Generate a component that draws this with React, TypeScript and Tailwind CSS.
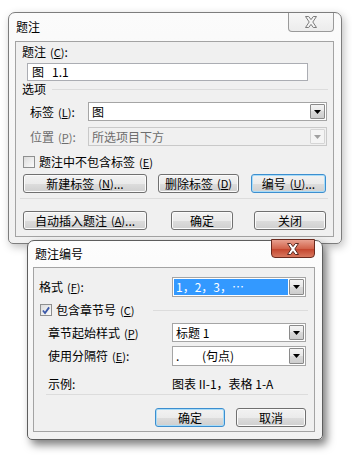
import * as React from "react";

const btnBase =
    "flex items-center justify-center h-[19px] rounded-[3px] border text-[12px] leading-none bg-[linear-gradient(#f2f2f2,#ebebeb_50%,#dddddd_50%,#cfcfcf)]";

function Btn({ children, className, focus }: { children: React.ReactNode; className: string; focus?: boolean }) {
    return (
        <div
            className={
                btnBase +
                " " +
                (focus
                    ? "border-[#3c8ecf] shadow-[inset_0_0_0_1px_#a8dcf8]"
                    : "border-[#707070] shadow-[inset_0_0_0_1px_#fbfbfb]") +
                " " +
                className
            }
        >
            {children}
        </div>
    );
}

/** mnemonic key shown like (C) with underlined letter */
function K({ k }: { k: string }) {
    return (
        <span className="text-[11px] ml-[4px]">
            (<span className="underline underline-offset-[1px]">{k}</span>)
        </span>
    );
}

function Arrow({ disabled }: { disabled?: boolean }) {
    return (
        <svg width="7" height="4" viewBox="0 0 7 4">
            <path d="M0 0h7L3.5 4z" fill={disabled ? "#a0a0a0" : "#000"} />
        </svg>
    );
}

function Combo({
    children,
    className,
    disabled,
    selected,
}: {
    children: React.ReactNode;
    className: string;
    disabled?: boolean;
    selected?: boolean;
}) {
    return (
        <div
            className={
                "flex items-stretch border p-[1px] " +
                (disabled ? "border-[#c9c9c9] bg-[#f0f0f0] text-[#6d6d6d]" : "border-[#a5a5a5] bg-white text-black") +
                " " +
                className
            }
        >
            <div
                className={
                    "flex-1 flex items-center pl-[2px] mr-[1px] text-[12px] " +
                    (selected ? "bg-[#3399ff] text-white" : "")
                }
            >
                {children}
            </div>
            <div
                className={
                    "w-[15px] flex items-center justify-center border rounded-[1px] " +
                    (disabled
                        ? "border-[#d5d5d5] bg-[#f4f4f4]"
                        : "border-[#8a8a8a] bg-[linear-gradient(#f4f4f4,#e8e8e8_50%,#dadada_50%,#cdcdcd)]")
                }
            >
                <Arrow disabled={disabled} />
            </div>
        </div>
    );
}

function CloseX({ red }: { red?: boolean }) {
    return (
        <svg width="14" height="12" viewBox="0 0 14 12">
            <path
                d="M1.5 0.5h3.2L7 3.6 9.3 0.5h3.2L8.8 6l3.7 5.5H9.3L7 8.4 4.7 11.5H1.5L5.2 6z"
                fill={red ? "#ffffff" : "#f4f4f4"}
                stroke={red ? "#5a2a22" : "#7c7c7c"}
                strokeWidth="1"
                strokeLinejoin="round"
            />
        </svg>
    );
}

function Check({ checked }: { checked?: boolean }) {
    return (
        <div className="w-[12px] h-[12px] border border-[#8e8f8f] bg-[linear-gradient(135deg,#dcdcdc,#fbfbfb)] p-[1px] flex items-center justify-center shrink-0">
            {checked && (
                <svg width="9" height="9" viewBox="0 0 9 9">
                    <path d="M1 4.5l2.4 2.8L8 1" fill="none" stroke="#3a58a8" strokeWidth="2" />
                </svg>
            )}
        </div>
    );
}

export default function App() {
    return (
        <div className="relative w-[352px] h-[456px] bg-white overflow-hidden text-black text-[12px] font-['Noto_Sans_CJK_SC','Noto_Sans',sans-serif]">
            {/* 题注 dialog */}
            <div className="absolute left-[8px] top-[12px] w-[334px] h-[232px] rounded-t-[7px] rounded-b-[5px] border border-[#7d7d7d] bg-[linear-gradient(#fbfbfb,#f1f1f1)] shadow-[2px_3px_8px_rgba(0,0,0,0.25)]">
                <div className="h-[28px] flex items-center pl-[7px] text-[12px]">题注</div>
                <div className="absolute right-[7px] top-0 w-[46px] h-[19px] rounded-b-[4px] border border-t-0 border-[#9a9a9a] bg-[linear-gradient(#f7f7f7,#ececec)] flex items-center justify-center">
                    <CloseX />
                </div>
                <div className="ml-[6px] w-[319px] h-[196px] border border-[#a3a3a3] bg-[#f0f0f0] flex flex-col">
                    <div className="mt-[2px] h-[16px] pl-[6px] flex items-center">
                        题注<K k="C" />:
                    </div>
                    <div className="mt-[3px] ml-[11px] w-[281px] h-[18px] border border-[#abadb3] bg-white flex items-center pl-[4px]">
                        <span>图</span>
                        <span className="ml-[8px]">1.1</span>
                    </div>
                    <div className="h-[16px] pl-[6px] flex items-center">
                        <span>选项</span>
                        <div className="flex-1 ml-[6px] mr-[5px] border-t border-[#dcdcdc]" />
                    </div>
                    <div className="mt-[5px] h-[19px] flex items-center">
                        <div className="ml-[14px] w-[58px]">
                            标签<K k="L" />:
                        </div>
                        <Combo className="w-[239px] h-[19px]">图</Combo>
                    </div>
                    <div className="mt-[6px] h-[19px] flex items-center text-[#6d6d6d]">
                        <div className="ml-[14px] w-[58px]">
                            位置<K k="P" />:
                        </div>
                        <Combo className="w-[239px] h-[19px]" disabled>
                            所选项目下方
                        </Combo>
                    </div>
                    <div className="mt-[8px] h-[16px] flex items-center pl-[7px]">
                        <Check />
                        <span className="ml-[4px]">
                            题注中不包含标签<K k="E" />
                        </span>
                    </div>
                    <div className="mt-[4px] flex pl-[7px]">
                        <Btn className="w-[124px]">
                            新建标签<K k="N" />...
                        </Btn>
                        <Btn className="w-[81px] ml-[11px]">
                            删除标签<K k="D" />
                        </Btn>
                        <Btn className="w-[75px] ml-[12px]" focus>
                            编号<K k="U" />...
                        </Btn>
                    </div>
                    <div className="mt-[5px] ml-[4px] mr-[5px] border-t border-[#dcdcdc]" />
                    <div className="mt-[12px] flex pl-[7px]">
                        <Btn className="w-[124px]">
                            自动插入题注<K k="A" />...
                        </Btn>
                        <Btn className="w-[62px] ml-[24px]">确定</Btn>
                        <Btn className="w-[72px] ml-[21px]">关闭</Btn>
                    </div>
                </div>
            </div>

            {/* 题注编号 dialog */}
            <div className="absolute left-[27px] top-[240px] w-[296px] h-[200px] rounded-t-[7px] rounded-b-[5px] border border-[#5e5e5e] bg-[linear-gradient(#fdfdfd,#f2f2f2)] shadow-[4px_5px_9px_rgba(0,0,0,0.5)]">
                <div className="h-[26px] flex items-center pl-[7px] text-[12px]">题注编号</div>
                <div className="absolute right-[7px] top-[-2px] w-[44px] h-[19px] rounded-b-[4px] border border-[#6b2a1e] bg-[linear-gradient(#e8a08f,#d2644c_50%,#c2412a_50%,#d8785f)] flex items-center justify-center">
                    <CloseX red />
                </div>
                <div className="ml-[5px] w-[282px] h-[165px] border border-[#a3a3a3] bg-[#f0f0f0] flex flex-col">
                    <div className="mt-[9px] h-[20px] flex items-center">
                        <div className="ml-[5px] w-[133px]">
                            格式<K k="F" />:
                        </div>
                        <Combo className="w-[134px] h-[20px]" selected>
                            1，2，3，…
                        </Combo>
                    </div>
                    <div className="mt-[5px] h-[16px] flex items-center pl-[6px]">
                        <Check checked />
                        <span className="ml-[4px]">
                            包含章节号<K k="C" />
                        </span>
                        <div className="ml-auto mr-[6px] w-[155px] border-t border-[#dcdcdc]" />
                    </div>
                    <div className="mt-[5px] h-[19px] flex items-center">
                        <div className="ml-[14px] w-[124px]">
                            章节起始样式<K k="P" />
                        </div>
                        <Combo className="w-[134px] h-[19px]">标题 1</Combo>
                    </div>
                    <div className="mt-[4px] h-[20px] flex items-center">
                        <div className="ml-[14px] w-[124px]">
                            使用分隔符<K k="E" />:
                        </div>
                        <Combo className="w-[134px] h-[20px]">
                            <span className="w-[26px]">.</span>(句点)
                        </Combo>
                    </div>
                    <div className="mt-[10px] h-[16px] flex items-center">
                        <div className="ml-[14px] w-[124px]">示例:</div>
                        <div>图表 II-1，表格 1-A</div>
                    </div>
                    <div className="mt-[2px] ml-[12px] mr-[6px] border-t border-[#dcdcdc]" />
                    <div className="mt-[13px] flex pl-[121px]">
                        <Btn className="w-[70px]" focus>
                            确定
                        </Btn>
                        <Btn className="w-[70px] ml-[11px]">取消</Btn>
                    </div>
                </div>
            </div>
        </div>
    );
}
